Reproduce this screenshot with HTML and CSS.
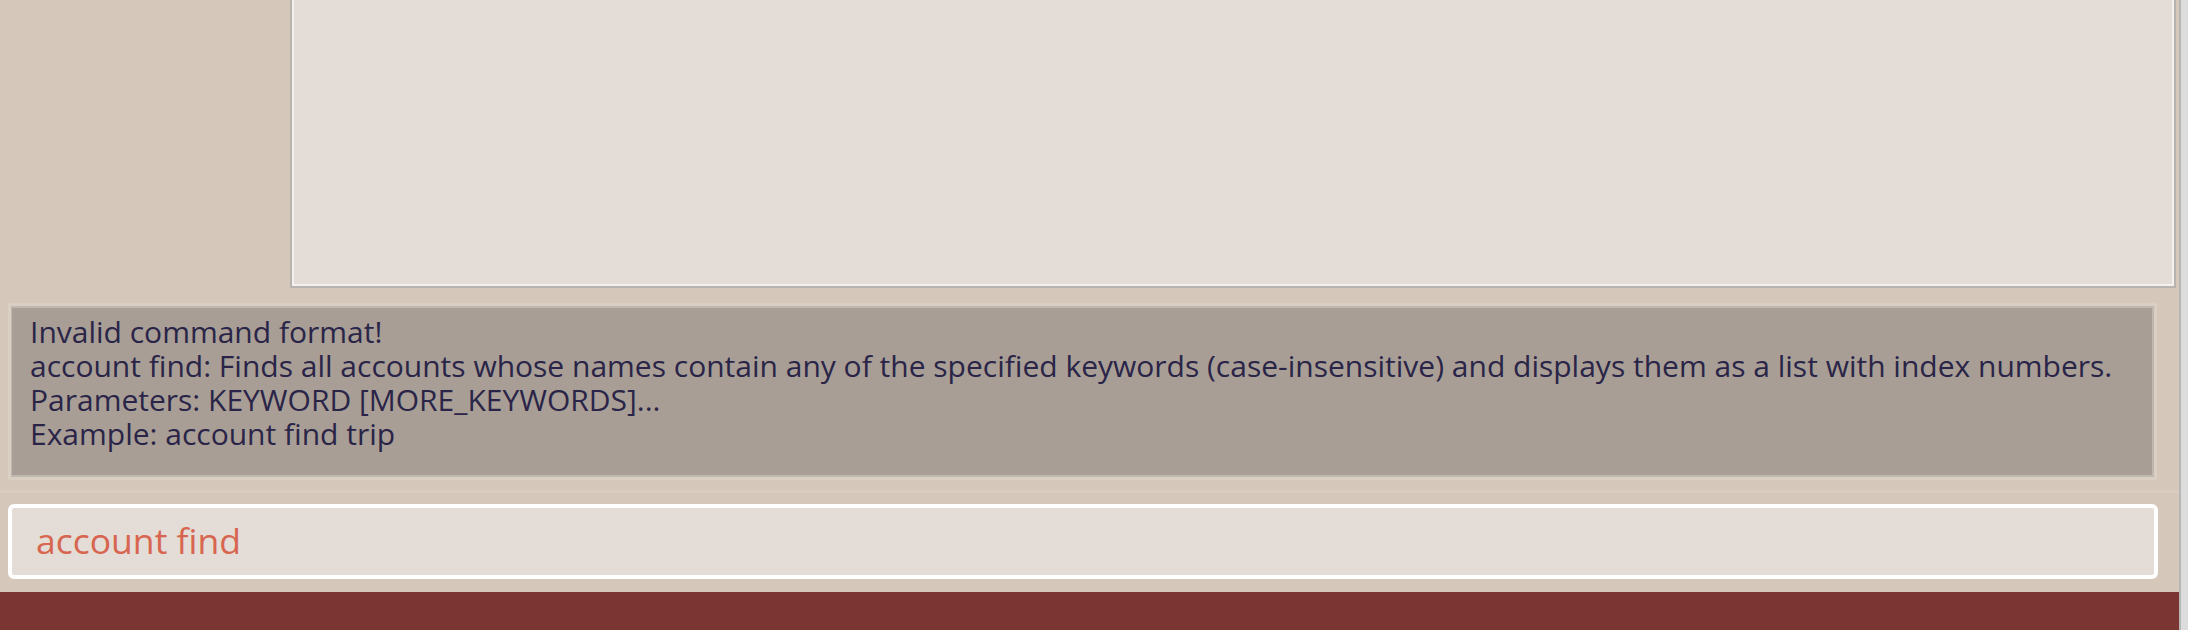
FILE: index.html
```html
<!DOCTYPE html>
<html lang="en">
<head>
<meta charset="utf-8">
<title>App</title>
<link rel="stylesheet" href="styles.css">
</head>
<body>
  <div class="app">
    <div class="top">
      <div class="sidebar"></div>
      <div class="list-panel"></div>
    </div>
    <div class="result-area">
      <div class="result-box">
        <div class="result-line">Invalid command format!</div>
        <div class="result-line">account find: Finds all accounts whose names contain any of the specified keywords (case-insensitive) and displays them as a list with index numbers.</div>
        <div class="result-line">Parameters: KEYWORD [MORE_KEYWORDS]...</div>
        <div class="result-line">Example: account find trip</div>
      </div>
    </div>
    <div class="command-area">
      <div class="command-box">
        <span class="command-text">account find</span>
      </div>
    </div>
    <div class="status-bar"></div>
  </div>
  <div class="edge"></div>
</body>
</html>
```
FILE: styles.css
```css
html, body {
  margin: 0;
  padding: 0;
}

body {
  width: 2188px;
  height: 630px;
  overflow: hidden;
  display: flex;
  background: #dcdcdc;
  font-family: "Open Sans", "Noto Sans", sans-serif;
}

.app {
  width: 2179px;
  height: 630px;
  display: flex;
  flex-direction: column;
  background: #d5c7ba;
  border-right: 2px solid #b9b7b5;
}

.edge {
  flex: 1;
  background: #dcdcdc;
}

.top {
  height: 288px;
  display: flex;
}

.sidebar {
  width: 290px;
}

.list-panel {
  flex: 1;
  margin-right: 3px;
  background: #e4dcd6;
  border: 2px solid #b8b3ae;
  border-top: none;
  box-shadow: inset 2px 0 0 #f4f0ed, inset -2px 0 0 #f4f0ed, inset 0 -2px 0 #f4f0ed;
}

.result-area {
  height: 202px;
  box-sizing: border-box;
  padding: 18px 25px 13px 11px;
}

.result-box {
  height: 171px;
  box-sizing: border-box;
  background: #a89e95;
  border: 2px solid #bfb8b1;
  border-left-width: 1px;
  box-shadow: 0 0 0 3px #dbcfc3;
  padding: 7px 18px;
  color: #2a2548;
  font-size: 30px;
  line-height: 34px;
  white-space: nowrap;
}

.command-area {
  height: 102px;
  box-sizing: border-box;
  border-top: 3px solid #d9ccc0;
  padding: 11px 21px 13px 8px;
}

.command-box {
  height: 75px;
  box-sizing: border-box;
  border: 4px solid #ffffff;
  border-radius: 6px;
  background: #e4dcd6;
  display: flex;
  align-items: center;
  padding-left: 24px;
  padding-bottom: 4px;
}

.command-text {
  color: #d7654f;
  font-size: 35.5px;
}

.status-bar {
  height: 38px;
  background: #7b3533;
}
```
